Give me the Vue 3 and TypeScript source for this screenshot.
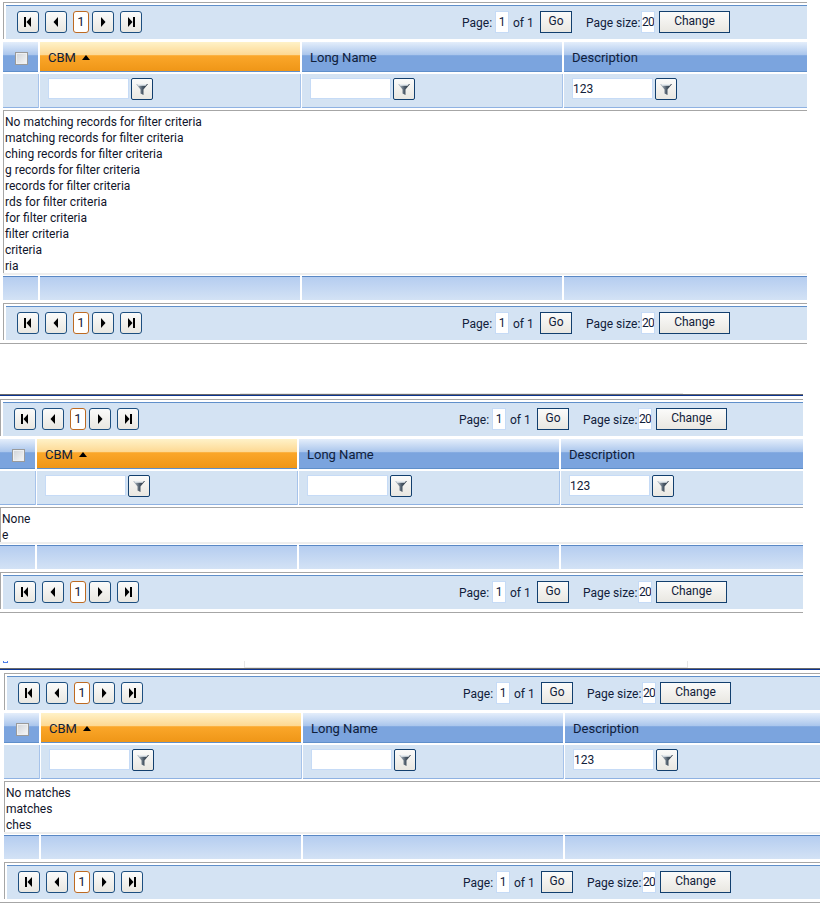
<script setup lang="ts">
interface Grid {
  left: number;
  width: number;
  lines: string[];
  rule?: { width: number; gap: number; tall: boolean };
}

const grids: Grid[] = [
  {
    left: 3,
    width: 804,
    lines: [
      "No matching records for filter criteria",
      "matching records for filter criteria",
      "ching records for filter criteria",
      "g records for filter criteria",
      "records for filter criteria",
      "rds for filter criteria",
      "for filter criteria",
      "filter criteria",
      "criteria",
      "ria",
    ],
  },
  {
    left: 0,
    width: 803,
    lines: ["None", "e"],
    rule: { width: 803, gap: 55, tall: false },
  },
  {
    left: 4,
    width: 816,
    lines: ["No matches", "matches", "ches"],
    rule: { width: 820, gap: 60, tall: true },
  },
];

const columns = [
  { name: "CBM", sorted: true, filter: "" },
  { name: "Long Name", sorted: false, filter: "" },
  { name: "Description", sorted: false, filter: "123" },
];

const pagers = ["top", "bottom"];
</script>

<template>
  <div class="page">
    <template v-for="(grid, g) in grids" :key="g">
      <div v-if="grid.rule" class="divider" :style="{ height: `${grid.rule.gap}px` }">
        <div class="ghost-row" :class="{ tall: grid.rule.tall }">
          <i v-if="grid.rule.tall" class="mark"></i>
          <div class="ghost"></div>
        </div>
        <div class="rule" :style="{ width: `${grid.rule.width}px` }"></div>
      </div>

      <div class="grid" :style="{ marginLeft: `${grid.left}px`, width: `${grid.width}px` }">
        <template v-for="place in pagers" :key="place">
          <template v-if="place === 'bottom'">
            <div class="content">
              <div v-for="(line, i) in grid.lines" :key="i" class="line">{{ line }}</div>
            </div>
            <div class="row foot">
              <div v-for="n in 4" :key="n" class="foot-cell"></div>
            </div>
          </template>

          <div class="pager" :class="place">
            <div class="pager-body">
              <button class="nav">
                <svg width="8" height="10" viewBox="0 0 8 10"><rect x="0" y="0" width="2" height="10" /><polygon points="7,0 7,10 2.5,5" /></svg>
              </button>
              <button class="nav second">
                <svg width="8" height="10" viewBox="0 0 8 10"><polygon points="6,0 6,10 1.5,5" /></svg>
              </button>
              <span class="current">1</span>
              <button class="nav">
                <svg width="8" height="10" viewBox="0 0 8 10"><polygon points="2,0 2,10 6.5,5" /></svg>
              </button>
              <button class="nav second">
                <svg width="8" height="10" viewBox="0 0 8 10"><polygon points="1,0 1,10 5.5,5" /><rect x="6" y="0" width="2" height="10" /></svg>
              </button>

              <label class="label page-label">Page:</label>
              <input class="num page-num" value="1" readonly />
              <span class="label of">of 1</span>
              <button class="cmd go">Go</button>
              <label class="label size-label">Page size:</label>
              <input class="num size-num" value="20" readonly />
              <button class="cmd change">Change</button>
            </div>
          </div>

          <div
            v-if="place === 'bottom'"
            class="end-line"
            :style="{ marginLeft: `${-grid.left}px` }"
          ></div>

          <template v-if="place === 'top'">
            <div class="row head">
              <div class="head-cell check-cell"><span class="check"></span></div>
              <div
                v-for="col in columns"
                :key="col.name"
                class="head-cell"
                :class="{ sorted: col.sorted }"
              >
                {{ col.name }}<i v-if="col.sorted" class="arrow"></i>
              </div>
            </div>
            <div class="row filters">
              <div class="filter-cell"></div>
              <div v-for="col in columns" :key="col.name" class="filter-cell">
                <input class="filter-input" :value="col.filter" readonly />
                <button class="funnel">
                  <svg width="14" height="14" viewBox="0 0 14 14">
                    <defs>
                      <linearGradient :id="`fn-${g}-${col.name.length}`" x1="0" x2="1" y1="0" y2="0">
                        <stop offset="0" stop-color="#c6ced6" />
                        <stop offset="0.55" stop-color="#4c5a68" />
                        <stop offset="1" stop-color="#28333f" />
                      </linearGradient>
                    </defs>
                    <polygon points="1,2 13,2 8.5,7.5 8.5,13 5.5,11.5 5.5,7.5" :fill="`url(#fn-${g}-${col.name.length})`" />
                    <polygon points="2,2 12,2 10.6,3.8 3.4,3.8" fill="#e6ebef" />
                  </svg>
                </button>
              </div>
            </div>
          </template>
        </template>
      </div>
    </template>
  </div>
</template>

<style scoped>
.page {
  padding-top: 2px;
  font-family: Roboto, "Open Sans", sans-serif;
  font-size: 12px;
  color: #10203a;
}

.divider {
  display: flex;
  flex-direction: column;
  justify-content: flex-end;
  padding-bottom: 3px;
  box-sizing: border-box;
}

.ghost-row {
  display: flex;
  align-items: flex-start;
  padding-left: 240px;
}

.ghost-row .ghost {
  width: 443px;
  height: 0;
  border-bottom: 1px solid #e6e6e6;
}

.ghost-row.tall {
  padding-left: 3px;
}

.ghost-row.tall .ghost {
  margin-left: 236px;
  height: 6px;
  width: 442px;
  border-left: 1px solid #e6e6e6;
  border-right: 1px solid #e6e6e6;
}

.mark {
  display: block;
  width: 3px;
  height: 1px;
  border: 1px solid #4f7fe8;
  border-top: 0;
}

.rule {
  height: 0;
  border-top: 1px solid #6b6b6b;
  border-bottom: 1px solid #0c3490;
}

.pager {
  border-top: 1px solid #a6a6a6;
  border-left: 1px solid #a6a6a6;
  padding: 2px 0 0 2px;
}

.pager.top {
  margin-bottom: 3px;
}

.pager.bottom {
  margin-top: 3px;
}

.end-line {
  margin-top: 3px;
  height: 1px;
  background: #a6a6a6;
}

.pager-body {
  display: flex;
  align-items: flex-start;
  height: 34px;
  box-sizing: border-box;
  padding: 5px 0 0 11px;
  background: #d4e3f3;
  border-top: 1px solid #5f8fca;
}

button {
  padding: 0;
  font: inherit;
  color: #10203a;
  cursor: pointer;
}

.nav {
  width: 22px;
  height: 22px;
  display: flex;
  align-items: center;
  justify-content: center;
  box-sizing: border-box;
  border: 1px solid #1d4f80;
  border-radius: 3px;
  background: linear-gradient(to bottom, #fbfbfa, #e9e7e1);
}

.nav svg {
  fill: #000;
}

.nav.second {
  margin-left: 6px;
}

.current {
  width: 16px;
  height: 22px;
  margin-left: 6px;
  margin-right: 3px;
  box-sizing: border-box;
  border: 1px solid #bd6a22;
  border-radius: 3px;
  background: #fff;
  text-align: center;
  line-height: 20px;
  font-size: 13px;
}

.label {
  line-height: 22px;
  padding-top: 1px;
  white-space: nowrap;
}

.page-label {
  width: 33px;
  margin-left: 320px;
}

.num {
  height: 22px;
  box-sizing: border-box;
  border: 1px solid #c6dbf6;
  background: #fff;
  padding: 0;
  text-align: center;
  font: inherit;
  color: #10203a;
  outline: none;
}

.page-num {
  width: 14px;
}

.of {
  width: 27px;
  margin-left: 4px;
}

.cmd {
  height: 22px;
  box-sizing: border-box;
  border: 1px solid #123f6e;
  background: linear-gradient(to bottom, #fbfbfa, #e9e7e1);
  line-height: 18px;
  padding-bottom: 2px;
}

.go {
  width: 32px;
}

.size-label {
  width: 55px;
  margin-left: 14px;
}

.size-num {
  width: 14px;
  letter-spacing: -0.7px;
  text-align: left;
}

.change {
  width: 71px;
  margin-left: 4px;
}

.row {
  display: grid;
  grid-template-columns: 35px 260px 260px 1fr;
  column-gap: 2px;
}

.head-cell {
  height: 30px;
  box-sizing: border-box;
  padding: 7px 0 0 8px;
  font-size: 13px;
  line-height: 18px;
  background: linear-gradient(to bottom, #e4eefb 0, #a9c5ec 45%, #7ba4de 47%, #7ba4de 100%);
  border-bottom: 1px solid #5f8fca;
}

.head-cell.sorted {
  display: flex;
  align-items: flex-start;
  background: linear-gradient(to bottom, #fff2c8 0, #fdd892 45%, #fba72a 47%, #ef9617 100%);
}

.check-cell {
  display: flex;
  padding: 10px 0 0 12px;
}

.check {
  width: 13px;
  height: 13px;
  box-sizing: border-box;
  border: 1px solid #9a9a9a;
  background: linear-gradient(135deg, #cfd3d8, #f7f7f7);
  box-shadow: inset 0 0 0 1px #eef0f2;
}

.arrow {
  width: 0;
  height: 0;
  margin: 6px 0 0 6px;
  border-left: 4px solid transparent;
  border-right: 4px solid transparent;
  border-bottom: 5px solid #000;
}

.filters {
  margin-top: 2px;
}

.filter-cell {
  display: flex;
  align-items: flex-start;
  height: 34px;
  box-sizing: border-box;
  padding: 4px 0 0 8px;
  background: #d4e3f3;
  border-bottom: 1px solid #8fb2e2;
  box-shadow: 1px 0 0 #a6c3ea;
}

.filter-cell:last-child {
  box-shadow: none;
}

.filter-input {
  width: 81px;
  height: 21px;
  box-sizing: border-box;
  border: 1px solid #c6dbf6;
  padding: 0;
  background: #fff;
  font: inherit;
  color: #10203a;
  outline: none;
}

.funnel {
  width: 22px;
  height: 22px;
  margin-left: 2px;
  display: flex;
  align-items: center;
  justify-content: center;
  box-sizing: border-box;
  border: 1px solid #123f6e;
  border-radius: 2px;
  background: linear-gradient(to bottom, #fbfbfa, #e9e7e1);
}

.content {
  margin-top: 2px;
  padding: 2px 0 0 1px;
  border-top: 1px solid #a6a6a6;
  border-left: 1px solid #a6a6a6;
  color: #10142a;
}

.line {
  height: 16px;
  line-height: 18px;
  white-space: nowrap;
}

.foot {
  padding-top: 1px;
  border-top: 2px solid #eeeeee;
}

.foot-cell {
  height: 24px;
  box-sizing: border-box;
  border-top: 1px solid #5a88c5;
  background: linear-gradient(to bottom, #b5cdf0, #d3e2f5);
}
</style>
